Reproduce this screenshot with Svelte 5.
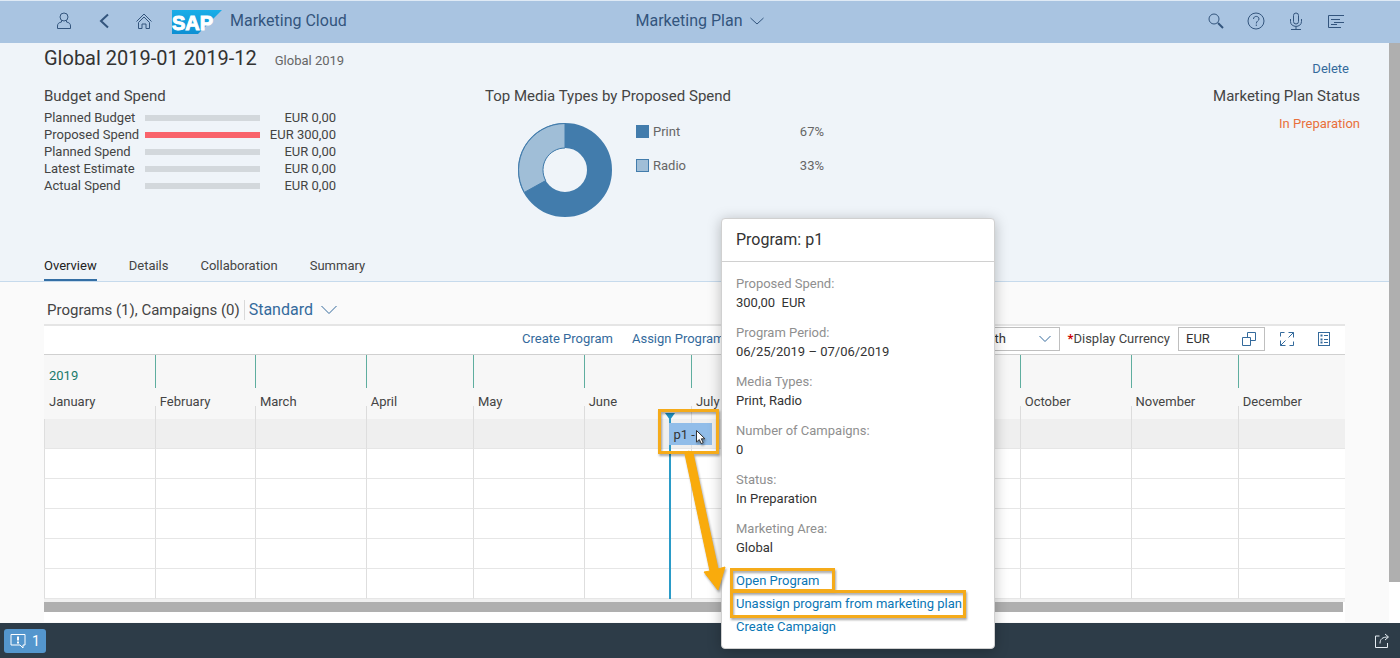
<script lang="ts">
	const budget = [
		{ label: 'Planned Budget', value: 'EUR 0,00', share: 0 },
		{ label: 'Proposed Spend', value: 'EUR 300,00', share: 100 },
		{ label: 'Planned Spend', value: 'EUR 0,00', share: 0 },
		{ label: 'Latest Estimate', value: 'EUR 0,00', share: 0 },
		{ label: 'Actual Spend', value: 'EUR 0,00', share: 0 }
	];

	const media = [
		{ label: 'Print', value: '67%' },
		{ label: 'Radio', value: '33%' }
	];

	const tabs = ['Overview', 'Details', 'Collaboration', 'Summary'];

	// the last day of the year is cut off by the viewport of the calendar
	const months = [
		{ name: 'January', days: 31 },
		{ name: 'February', days: 28 },
		{ name: 'March', days: 31 },
		{ name: 'April', days: 30 },
		{ name: 'May', days: 31 },
		{ name: 'June', days: 30 },
		{ name: 'July', days: 31 },
		{ name: 'August', days: 31 },
		{ name: 'September', days: 30 },
		{ name: 'October', days: 31 },
		{ name: 'November', days: 30 },
		{ name: 'December', days: 30 }
	];
	const totalDays = months.reduce((sum, m) => sum + m.days, 0);
	const columns = months.map((m) => `minmax(0, ${m.days}fr)`).join(' ');
	const rows = [0, 1, 2, 3, 4, 5];

	const program = { name: 'p1 -', start: 175, length: 12 };
	const startPos = (program.start / totalDays) * 100;
	const barWidth = (program.length / totalDays) * 100;

	const details = [
		{ label: 'Proposed Spend:', value: '300,00\u00a0 EUR' },
		{ label: 'Program Period:', value: '06/25/2019 – 07/06/2019' },
		{ label: 'Media Types:', value: 'Print, Radio' },
		{ label: 'Number of Campaigns:', value: '0' },
		{ label: 'Status:', value: 'In Preparation' },
		{ label: 'Marketing Area:', value: 'Global' }
	];
	const links = ['Open Program', 'Unassign program from marketing plan', 'Create Campaign'];
</script>

<div class="page">
	<header class="shell">
		<div class="shell-left">
			<button class="shell-btn" aria-label="User">
				<svg width="16" height="20" viewBox="0 0 16 20">
					<circle cx="8" cy="6" r="4" />
					<path d="M5.500 9.500V11C3 11.500 1.500 12.500 1.500 15v2.500h13V15c0-2.500-1.500-3.500-4-4V9.500" />
				</svg>
			</button>
			<button class="shell-btn" aria-label="Back">
				<svg width="16" height="20" viewBox="0 0 16 20"><path class="bold" d="M12 3.500 5 10l7 6.500" /></svg>
			</button>
			<button class="shell-btn" aria-label="Home">
				<svg width="18" height="20" viewBox="0 0 18 20">
					<path d="M1.500 10.500 9 3l7.500 7.500M3.500 11.500v6h3.500v-4.500h4v4.500h3.500v-6" />
					<path d="M3.500 11.500 9 6l5.500 5.500" />
				</svg>
			</button>
			<a class="logo" href="#home" aria-label="SAP home">
				<svg width="50" height="24" viewBox="0 0 50 24">
					<defs>
						<linearGradient id="sap" x1="0" y1="0" x2="0" y2="1">
							<stop offset="0" stop-color="#1aaee8" />
							<stop offset="1" stop-color="#0d8fd3" />
						</linearGradient>
					</defs>
					<polygon points="0,0 50,0 26,24 0,24" fill="url(#sap)" stroke="none" />
					<text x="0" y="20" class="logo-text">SAP</text>
				</svg>
			</a>
			<span class="product">Marketing Cloud</span>
		</div>
		<button class="app-title">
			Marketing Plan
			<svg width="14" height="8" viewBox="0 0 14 8"><path d="M.5 1 7 7l6.500-6" /></svg>
		</button>
		<div class="shell-right">
			<button class="shell-btn" aria-label="Search">
				<svg width="18" height="20" viewBox="0 0 18 20">
					<circle cx="7" cy="8" r="5" />
					<path class="bold" d="m11 12 5 5" />
				</svg>
			</button>
			<button class="shell-btn" aria-label="Help">
				<svg width="18" height="20" viewBox="0 0 18 20">
					<circle cx="9" cy="10" r="8" />
					<path d="M6.500 8c0-3.500 5.500-3.500 5.500 0C12 10 9.300 9.800 9.300 12.500M9.300 13.500V15" />
				</svg>
			</button>
			<button class="shell-btn" aria-label="Voice input">
				<svg width="16" height="20" viewBox="0 0 16 20">
					<rect x="5.500" y="2" width="5" height="11" rx="2.500" />
					<path d="M2.500 8v2.500c0 6.500 11 6.500 11 0V8M8 15.500V18M3 18.500h10" />
				</svg>
			</button>
			<button class="shell-btn" aria-label="Notifications">
				<svg width="18" height="20" viewBox="0 0 18 20">
					<path d="M17 4.500H1.500v12H14M4 8.500h9M7 11.500h10M4 13.500h6" />
				</svg>
			</button>
		</div>
	</header>

	<div class="body">
		<main>
			<section class="object">
				<div class="title-row">
					<h1>Global 2019-01 2019-12</h1>
					<span class="subtitle">Global 2019</span>
				</div>
				<div class="facets">
					<div class="facet">
						<h2>Budget and Spend</h2>
						<table class="budget">
							<tbody>
								{#each budget as row}
									<tr>
										<th scope="row">{row.label}</th>
										<td class="bar-cell">
											<div class="track"><div class="fill" style="width: {row.share}%"></div></div>
										</td>
										<td class="amount">{row.value}</td>
									</tr>
								{/each}
							</tbody>
						</table>
					</div>
					<div class="facet">
						<h2>Top Media Types by Proposed Spend</h2>
						<div class="media">
							<svg class="donut" width="96" height="96" viewBox="-48 -48 96 96">
								<circle r="34.500" fill="none" stroke="#427cac" stroke-width="25" />
								<path
									d="M0-46.500A46.500 46.500 0 0 0-40.700 22.400L-19.300 10.600A22 22 0 0 1 0-22Z"
									fill="#a0bed7"
									stroke="#427cac"
								/>
							</svg>
							<ul class="legend">
								{#each media as item}
									<li>
										<i class={['swatch', item.label.toLowerCase()]}></i>
										<span>{item.label}</span>
										<b>{item.value}</b>
									</li>
								{/each}
							</ul>
						</div>
					</div>
					<div class="status">
						<button class="link-btn delete">Delete</button>
						<h2>Marketing Plan Status</h2>
						<p>In Preparation</p>
					</div>
				</div>
				<nav class="tabs">
					{#each tabs as tab, i}
						<a href="#{tab.toLowerCase()}" class:selected={i === 0}>{tab}</a>
					{/each}
				</nav>
			</section>

			<section class="programs">
				<div class="variant-row">
					<h2>Programs (1), Campaigns (0)</h2>
					<button class="variant">
						Standard
						<svg width="16" height="10" viewBox="0 0 16 10"><path d="M.5 1 8 8.500 15.500 1" /></svg>
					</button>
				</div>
				<div class="panel">
					<div class="toolbar">
						<button class="link-btn">Create Program</button>
						<button class="link-btn">Assign Program</button>
						<div class="select-box">
							<select aria-label="Time scale">
								<option>Month</option>
							</select>
							<svg width="12" height="8" viewBox="0 0 12 8"><path d="M.5 1 6 6.500 11.500 1" /></svg>
						</div>
						<label for="currency"><span class="required">*</span>Display Currency</label>
						<div class="currency-box">
							<input id="currency" type="text" value="EUR" />
							<button aria-label="Value help">
								<svg width="14" height="14" viewBox="0 0 14 14">
									<path d="M5.500 5.500v-5h8v8h-5M.5 5.500h8v8h-8z" />
								</svg>
							</button>
						</div>
						<button class="tool" aria-label="Full screen">
							<svg width="16" height="16" viewBox="0 0 16 16">
								<path d="M1.500 5.500v-4h4M14.500 10.500v4h-4M9.500 1.500h5v5M14.500 1.500 9.500 6.500M6.500 14.500h-5v-5M1.500 14.500l5-5" />
							</svg>
						</button>
						<button class="tool" aria-label="Legend">
							<svg width="12" height="16" viewBox="0 0 12 16">
								<rect x=".5" y="1.500" width="11" height="13" />
								<path d="M6 4.500h4M6 8.500h4M6 11.500h4" />
								<path class="dots" d="M2.500 4.500h2M2.500 8.500h2M2.500 11.500h2" />
							</svg>
						</button>
					</div>
					<div class="gantt">
						<div class="months" style="grid-template-columns: {columns}">
							{#each months as month, i}
								<div class="month">
									<div class="year">{i === 0 ? '2019' : ''}</div>
									<div class="name">{month.name}</div>
								</div>
							{/each}
						</div>
						<div class="rows">
							{#each rows as row}
								<div class="row" style="grid-template-columns: {columns}">
									{#each months as _}
										<div class="cell"></div>
									{/each}
								</div>
							{/each}
							<div class="now" style="left: {startPos}%"></div>
							<button class="program" style="left: {startPos}%; width: {barWidth}%">{program.name}</button>
						</div>
					</div>
					<div class="hscroll"></div>
				</div>
			</section>
		</main>
		<div class="vscroll"><div class="thumb"></div></div>
	</div>

	<footer>
		<button class="messages" aria-label="1 message">
			<svg width="16" height="16" viewBox="0 0 16 16">
				<path d="M1 1.500h14v10.500h-2v3l-3-3H1z" />
				<path class="bold" d="M8 3.500v4M8 8.500v2" />
			</svg>
			1
		</button>
		<button class="share" aria-label="Share">
			<svg width="16" height="16" viewBox="0 0 16 16">
				<path d="M5.500 3H1.500v11.500h12V10M6 10.500C6 6 8.500 4 14 4M11 1l3.500 3L11 7" />
			</svg>
		</button>
	</footer>

	<div class="popover" role="dialog" aria-label="Program: p1">
		<h3>Program: p1</h3>
		<dl>
			{#each details as item}
				<div>
					<dt>{item.label}</dt>
					<dd>{item.value}</dd>
				</div>
			{/each}
		</dl>
		<div class="links">
			{#each links as link}
				<a href="#program">{link}</a>
			{/each}
		</div>
	</div>

	<!-- Callouts: program bar, arrow, the two links -->
	<svg class="callouts" width="360" height="260" viewBox="640 380 360 260">
		<g class="frames">
			<rect x="659.500" y="410.500" width="58" height="42" />
			<rect x="731.500" y="569.500" width="102" height="21" />
			<rect x="731.500" y="591.500" width="233" height="25" />
		</g>
		<path class="arrow" d="M685 454Q688 449 693 453L718 569 725 567 718 590 704 572 710 571Z" />
		<path class="cursor" d="M696.500 430.500v11.500l2.800-2.400 1.900 4 2-1-1.900-3.800h3.600z" />
	</svg>
</div>

<style>
	:global(body) {
		margin: 0;
		font-family: Roboto, 'Liberation Sans', sans-serif;
		font-size: 13px;
		color: #444;
	}

	.page {
		position: relative;
		display: flex;
		flex-direction: column;
		min-height: 100vh;
		background: #fafafa;
	}

	button {
		padding: 0;
		border: 0;
		background: none;
		font: inherit;
		color: inherit;
		cursor: pointer;
	}

	a {
		text-decoration: none;
		color: inherit;
	}

	svg {
		display: block;
		fill: none;
		stroke: currentColor;
		stroke-width: 1;
	}

	h1,
	h2,
	h3,
	p,
	dl,
	dd,
	ul {
		margin: 0;
		padding: 0;
		font-weight: 400;
	}

	h2 {
		font-size: 15px;
		line-height: 20px;
	}

	/* Shell bar */
	.shell {
		display: grid;
		grid-template-columns: 1fr auto 1fr;
		align-items: center;
		box-sizing: border-box;
		height: 43px;
		padding: 0 44px 3px;
		border-top: 1px solid #dfeaf5;
		background: #a9c4e1;
		color: #33557d;
	}

	.shell-left,
	.shell-right {
		display: flex;
		align-items: center;
	}

	.shell-right {
		justify-content: flex-end;
	}

	.shell-btn {
		display: flex;
		justify-content: center;
		width: 40px;
	}

	.bold {
		stroke-width: 2;
	}

	.logo {
		margin: 2px 8px 0;
	}

	.logo-text {
		font: bold 20px 'Liberation Sans', sans-serif;
		fill: #fff;
		stroke: #fff;
	}

	.product,
	.app-title {
		font-size: 16px;
		line-height: 20px;
	}

	.app-title {
		display: flex;
		align-items: center;
		gap: 8px;
	}

	.body {
		display: flex;
		flex: 1;
	}

	main {
		flex: 1;
		min-width: 0;
	}

	.vscroll {
		width: 11px;
		background: #fff;
	}

	.thumb {
		height: 93%;
		background: #afafaf;
	}

	/* Object header */
	.object {
		padding: 0 29px 0 44px;
		border-bottom: 1px solid #c6daec;
		background: #eff4f9;
	}

	.title-row {
		display: flex;
		align-items: baseline;
		gap: 18px;
		padding-top: 3px;
	}

	h1 {
		font-size: 20px;
		line-height: 24px;
		color: #333;
	}

	.subtitle {
		color: #666;
	}

	.facets {
		display: grid;
		grid-template-columns: 441px 1fr auto;
		height: 182px;
	}

	.facet {
		padding-top: 16px;
	}

	.budget {
		width: 292px;
		margin-top: 3px;
		border-collapse: collapse;
	}

	.budget th,
	.budget td {
		padding: 0;
		line-height: 17px;
		font-weight: 400;
		text-align: left;
	}

	.budget th {
		width: 101px;
	}

	.bar-cell {
		width: 115px;
	}

	.budget .amount {
		text-align: right;
	}

	.track {
		height: 6px;
		background: #d3d8dc;
	}

	.fill {
		height: 6px;
		background: #f9636b;
	}

	.media {
		display: flex;
		gap: 23px;
		padding: 16px 0 0 32px;
	}

	.legend {
		width: 188px;
		list-style: none;
		color: #666;
	}

	.legend li {
		display: flex;
		align-items: center;
		gap: 4px;
		height: 18px;
		margin-bottom: 16px;
	}

	.legend b {
		margin-left: auto;
		font-weight: 400;
	}

	.swatch {
		box-sizing: border-box;
		width: 13px;
		height: 13px;
		border: 1px solid #427cac;
		background: #427cac;
	}

	.swatch.radio {
		background: #a0bed7;
	}

	.status {
		margin-top: -9px;
		text-align: right;
	}

	.status h2 {
		margin-top: 9px;
	}

	.status p {
		margin-top: 8px;
		line-height: 20px;
		color: #e9703b;
	}

	.link-btn {
		color: #346a9c;
		line-height: 16px;
	}

	.delete {
		margin-right: 11px;
	}

	.tabs {
		display: flex;
		gap: 32px;
	}

	.tabs a {
		padding: 4px 0 3px;
		line-height: 20px;
		border-bottom: 2px solid transparent;
	}

	.tabs .selected {
		border-bottom-color: #346fa5;
		color: #222;
	}

	/* Programs calendar */
	.programs {
		padding: 0 44px;
	}

	.variant-row {
		display: flex;
		align-items: center;
		gap: 4px;
		height: 42px;
		padding: 14px 0 0 3px;
		box-sizing: border-box;
	}

	.variant {
		display: flex;
		align-items: center;
		gap: 8px;
		padding: 0 4px;
		border-left: 1px solid #d9d9d9;
		font-size: 16px;
		line-height: 20px;
		color: #346a9c;
	}

	.panel {
		padding-bottom: 10px;
		background: #fff;
	}

	.toolbar {
		display: flex;
		align-items: center;
		justify-content: flex-end;
		box-sizing: border-box;
		height: 30px;
		padding: 0 13px 3px 0;
		border-top: 2px solid #e5e5e5;
	}

	.toolbar .link-btn {
		margin-right: 19px;
	}

	.select-box {
		position: relative;
		margin-left: 216px;
		color: #346a9c;
	}

	select,
	.currency-box {
		box-sizing: border-box;
		height: 24px;
		border: 1px solid #bfbfbf;
		border-radius: 0;
		background: #fff;
		font: inherit;
		color: #333;
	}

	select {
		appearance: none;
		display: block;
		width: 100px;
		padding: 0 8px;
	}

	.select-box svg {
		position: absolute;
		right: 9px;
		top: 8px;
		pointer-events: none;
	}

	label {
		margin: 0 8px;
	}

	.required {
		font-weight: 700;
		color: #c00;
	}

	.currency-box {
		display: flex;
		align-items: center;
		justify-content: space-between;
		width: 87px;
		padding: 0 8px 0 7px;
	}

	.currency-box input {
		width: 48px;
		padding: 0;
		border: 0;
		background: none;
		font: inherit;
		color: inherit;
	}

	.currency-box button,
	.tool {
		color: #346a9c;
	}

	.tool {
		display: flex;
		justify-content: center;
		width: 16px;
		margin-left: 14px;
	}

	.tool + .tool {
		margin-left: 21px;
	}

	.dots {
		stroke-width: 2;
	}

	.gantt {
		border-top: 1px solid #d0d0d0;
		border-bottom: 3px solid #f0f0f0;
	}

	.months {
		display: grid;
		background: #f7f7f7;
	}

	.year {
		box-sizing: border-box;
		height: 33px;
		padding: 12px 0 0 4px;
		border-left: 1px solid #5fae9f;
		line-height: 18px;
		color: #1b7a6b;
	}

	.name {
		height: 31px;
		padding: 5px 0 0 5px;
		box-sizing: border-box;
		line-height: 18px;
		/* short tick under each month label */
		background: linear-gradient(#dcdcdc, #dcdcdc) 0 100% / 1px 13px no-repeat;
	}

	.month:first-child .year {
		border-left-color: transparent;
	}

	.month:first-child .name {
		background: none;
	}

	.rows {
		position: relative;
	}

	.row {
		display: grid;
		height: 30px;
	}

	.row:first-child {
		background: #efefef;
	}

	.cell {
		border-left: 1px solid #dedede;
		border-bottom: 1px solid #e6e6e6;
	}

	.now {
		position: absolute;
		top: 0;
		bottom: 0;
		width: 2px;
		background: #2a9bc8;
	}

	.now::before {
		content: '';
		position: absolute;
		top: -6px;
		left: -4px;
		border: 5px solid transparent;
		border-top: 7px solid #1f8fc0;
		border-bottom: 0;
	}

	.program {
		position: absolute;
		top: 4px;
		height: 22px;
		padding-left: 4px;
		background: #91bde9;
		text-align: left;
		color: #333;
	}

	.hscroll {
		height: 10px;
		margin-right: 2px;
		background: #afafaf;
	}

	/* Footer */
	footer {
		display: flex;
		align-items: center;
		justify-content: space-between;
		height: 35px;
		padding: 0 10px 0 4px;
		background: #2d3c48;
		color: #e6edf3;
	}

	.messages {
		display: flex;
		align-items: center;
		justify-content: center;
		gap: 6px;
		width: 42px;
		height: 24px;
		border-radius: 3px;
		background: #5496cd;
		font-size: 14px;
		color: #fff;
	}

	/* Program popover */
	.popover {
		position: absolute;
		left: 721px;
		top: 218px;
		box-sizing: border-box;
		width: 274px;
		padding-bottom: 10px;
		border: 1px solid #d0d0d0;
		border-radius: 4px;
		background: #fff;
		box-shadow: 0 2px 14px rgba(0, 0, 0, 0.25);
		color: #333;
	}

	.popover h3 {
		padding: 0 14px;
		border-bottom: 1px solid #d0d0d0;
		font-size: 16px;
		line-height: 42px;
	}

	.popover dl {
		display: grid;
		gap: 11px;
		padding: 12px 14px;
		line-height: 19px;
	}

	.popover dt {
		color: #8f8f8f;
	}

	.links {
		display: flex;
		flex-direction: column;
		align-items: flex-start;
		padding: 0 14px;
		line-height: 23px;
		color: #0a76b5;
	}

	.callouts {
		position: absolute;
		left: 640px;
		top: 380px;
		pointer-events: none;
		filter: drop-shadow(1px 2px 1px rgba(0, 0, 0, 0.35));
	}

	.frames {
		stroke: #f5ab1a;
		stroke-width: 3;
	}

	.arrow {
		fill: #f9ab0c;
		stroke: #f9ab0c;
	}

	.cursor {
		fill: #fff;
		stroke: #333;
	}
</style>
